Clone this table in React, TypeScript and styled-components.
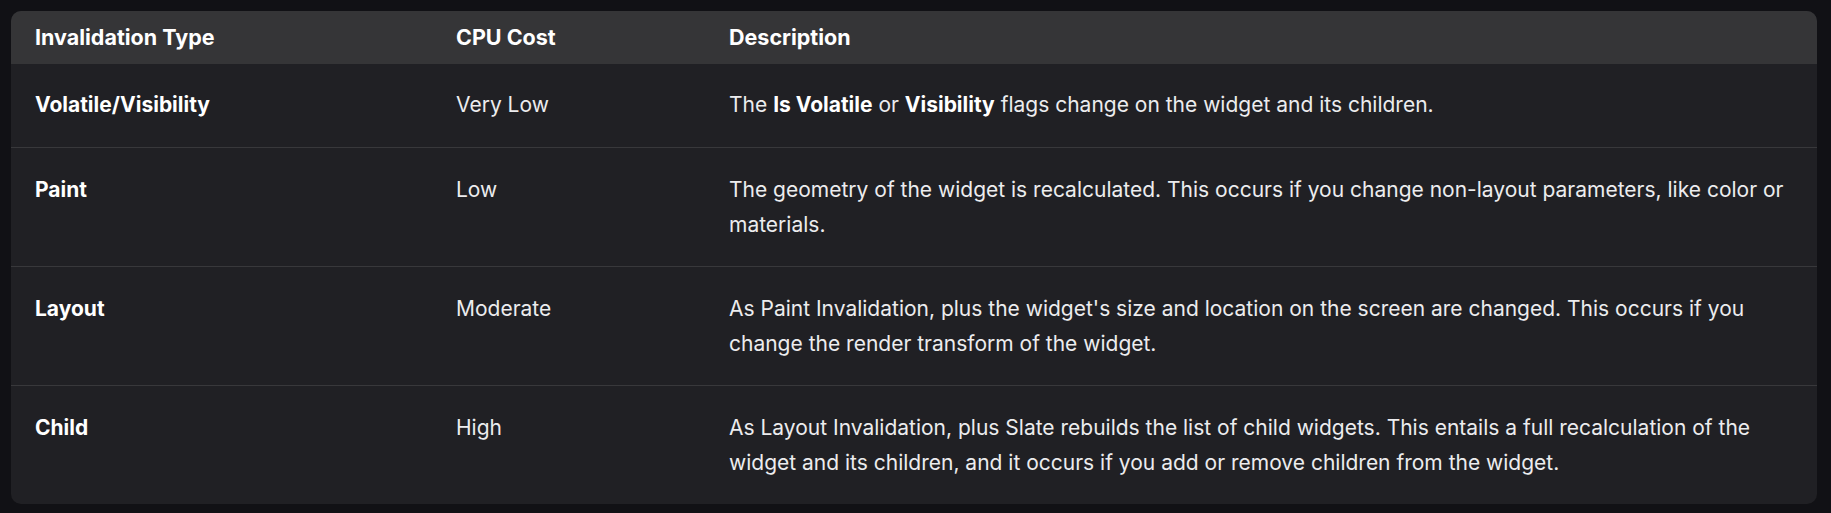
import { Fragment } from 'react';
import styled, { createGlobalStyle } from 'styled-components';

const GlobalStyle = createGlobalStyle`
	html, body {
		margin: 0;
		padding: 0;
		background: #111115;
	}
	body {
		font-family: Inter, 'Noto Sans', sans-serif;
		color: #ececee;
		-webkit-font-smoothing: antialiased;
	}
`;

const Page = styled.div`
	padding: 11px 14px 0 11px;
	height: 513px;
	box-sizing: border-box;
	overflow: hidden;
`;

const Card = styled.div`
	border-radius: 10px;
	overflow: hidden;
	background: #202024;
	display: grid;
	grid-template-columns: 421px 273px 1fr;
`;

const HeadCell = styled.div`
	background: #353537;
	padding: 9px 24px;
	font-size: 21.5px;
	line-height: 35px;
	font-weight: 700;
	color: #ffffff;
`;

const Cell = styled.div<{ $first?: boolean; $strong?: boolean }>`
	padding: ${(p) => (p.$first ? '23px 24px 25px' : '24px 24px')};
	font-size: 21px;
	line-height: 35px;
	font-weight: ${(p) => (p.$strong ? 700 : 400)};
	color: ${(p) => (p.$strong ? '#ffffff' : '#ececee')};
	border-top: ${(p) => (p.$first ? 'none' : '1px solid #38383b')};

	b {
		font-weight: 700;
		color: #ffffff;
	}
`;

const rows = [
	{
		type: 'Volatile/Visibility',
		cost: 'Very Low',
		desc: (
			<>
				The <b>Is Volatile</b> or <b>Visibility</b> flags change on the widget and its children.
			</>
		),
	},
	{
		type: 'Paint',
		cost: 'Low',
		desc: 'The geometry of the widget is recalculated. This occurs if you change non-layout parameters, like color or materials.',
	},
	{
		type: 'Layout',
		cost: 'Moderate',
		desc: "As Paint Invalidation, plus the widget's size and location on the screen are changed. This occurs if you change the render transform of the widget.",
	},
	{
		type: 'Child',
		cost: 'High',
		desc: 'As Layout Invalidation, plus Slate rebuilds the list of child widgets. This entails a full recalculation of the widget and its children, and it occurs if you add or remove children from the widget.',
	},
];

export default function App() {
	return (
		<>
			<GlobalStyle />
			<Page>
				<Card>
					<HeadCell>Invalidation Type</HeadCell>
					<HeadCell>CPU Cost</HeadCell>
					<HeadCell>Description</HeadCell>
					{rows.map((r, i) => (
						<Fragment key={r.type}>
							<Cell $first={i === 0} $strong>
								{r.type}
							</Cell>
							<Cell $first={i === 0}>{r.cost}</Cell>
							<Cell $first={i === 0}>{r.desc}</Cell>
						</Fragment>
					))}
				</Card>
			</Page>
		</>
	);
}
